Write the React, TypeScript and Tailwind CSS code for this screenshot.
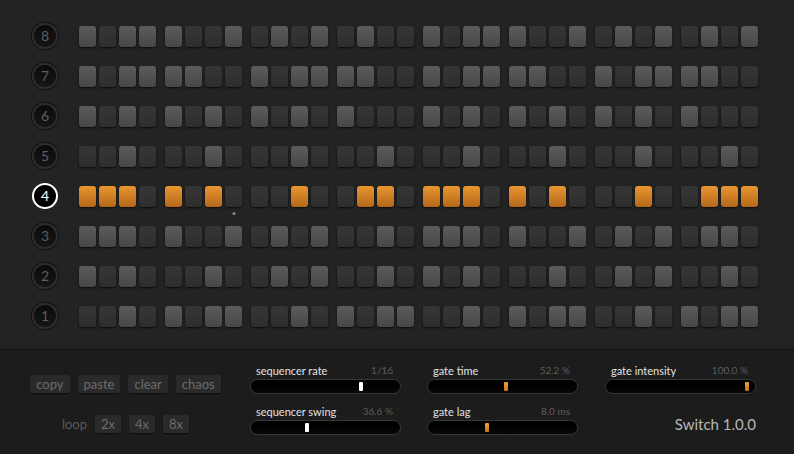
import React from "react";

// L = lit step, D = dark step, O = active (orange) step
const rows: { n: number; steps: string }[] = [
  { n: 8, steps: "LDLL LDDL DLDL DLDD LDLL LDDL DLDL DLDL" },
  { n: 7, steps: "LDLL LLDD LDLL LLDD LDLL LLDD LDLL LLDD" },
  { n: 6, steps: "LDLD LDLD LDLD LDDD LDLD LDLD LDLD LDDD" },
  { n: 5, steps: "DDLD DDLD DDLD DDLD DDLD DDLD DDLD DDLD" },
  { n: 4, steps: "OOOD ODOD DDOD DOOD OOOD ODOD DDOD DOOO" },
  { n: 3, steps: "LLLD LDDL DLDL DDLD LLLD LDDL DLDL DLLD" },
  { n: 2, steps: "LDLD DDLD DLDL DDLD LDLD DDLD DLDL DDLD" },
  { n: 1, steps: "DDLD LDLL DDLD LDLL DDLD LDLL DDLD LDLL" },
];

const activeRow = 4;
const playStep = 7;

function Step({ kind, play }: { kind: string; play: boolean }) {
  const cls =
    kind === "O"
      ? "bg-gradient-to-b from-[#ea962f] to-[#b5681a]"
      : kind === "L"
        ? "bg-gradient-to-b from-[#5c5c5c] to-[#474747]"
        : "bg-gradient-to-b from-[#363636] to-[#2d2d2d]";
  return (
    <div
      className={`relative h-[21px] w-[17px] rounded-[3px] shadow-[0_1px_2px_rgba(0,0,0,0.7)] ${cls}`}
    >
      {play ? (
        <span className="absolute left-1/2 top-[26px] h-[3px] w-[3px] -translate-x-1/2 rounded-full bg-[#8a8a8a]" />
      ) : null}
    </div>
  );
}

function RowBadge({ n, active }: { n: number; active: boolean }) {
  return (
    <div
      className={`flex h-[26px] w-[26px] shrink-0 items-center justify-center rounded-full text-[14px] leading-none ${
        active
          ? "border-2 border-white bg-black text-white"
          : "border-2 border-[#2e2e2e] bg-gradient-to-b from-[#0a0a0a] to-[#161616] text-[#5e5e5e] shadow-[0_0_0_1px_rgba(0,0,0,0.6)]"
      }`}
    >
      {n}
    </div>
  );
}

function Btn({ label }: { label: string }) {
  return (
    <button
      type="button"
      className="flex h-[18px] items-center rounded-[2px] bg-[#2a2a2a] px-[6px] text-[13px] leading-none text-[#6c6c6c] shadow-[0_1px_1px_rgba(0,0,0,0.5)]"
    >
      {label}
    </button>
  );
}

type SliderProps = {
  label: string;
  value: string;
  pos: number;
  orange?: boolean;
};

function Slider({ label, value, pos, orange }: SliderProps) {
  return (
    <div className="flex w-[151px] flex-col">
      <div className="flex h-[14px] items-start justify-between px-[6px]">
        <span className="text-[11px] leading-none text-[#e2e2e2]">{label}</span>
        <span className="pr-[2px] text-[10px] leading-none text-[#5c5c5c]">{value}</span>
      </div>
      <div className="relative h-[15px] rounded-full border border-[#363636] bg-gradient-to-b from-[#000] to-[#0a0a0a] shadow-[inset_0_1px_2px_rgba(0,0,0,0.9)]">
        <span
          className={`absolute top-[2px] h-[9px] w-[4px] rounded-[1px] ${
            orange ? "bg-gradient-to-b from-[#f3a23a] to-[#c8721c]" : "bg-white"
          }`}
          style={{ left: `${pos}px` }}
        />
      </div>
    </div>
  );
}

export default function App() {
  return (
    <div
      className="flex h-[454px] w-[794px] flex-col overflow-hidden bg-[#232323]"
      style={{ fontFamily: "Lato, 'Open Sans', sans-serif" }}
    >
      <div className="flex h-[349px] flex-col pl-8 pt-4">
        {rows.map((row) => {
          const steps = row.steps.replace(/ /g, "").split("");
          const groups = [0, 1, 2, 3, 4, 5, 6, 7].map((g) => steps.slice(g * 4, g * 4 + 4));
          return (
            <div key={row.n} className="flex h-10 items-center">
              <RowBadge n={row.n} active={row.n === activeRow} />
              <div className="ml-[21px] flex gap-[9px]">
                {groups.map((g, gi) => (
                  <div key={gi} className="flex gap-[3px]">
                    {g.map((k, i) => (
                      <Step
                        key={i}
                        kind={k}
                        play={row.n === activeRow && gi * 4 + i === playStep}
                      />
                    ))}
                  </div>
                ))}
              </div>
            </div>
          );
        })}
      </div>

      <div className="flex flex-1 border-t border-[#111] bg-[#1c1c1c]">
        <div className="ml-[31px] mt-[25px] flex w-[189px] flex-col items-center gap-[22px]">
          <div className="flex gap-[8px]">
            <Btn label="copy" />
            <Btn label="paste" />
            <Btn label="clear" />
            <Btn label="chaos" />
          </div>
          <div className="flex items-center gap-[8px]">
            <span className="text-[13px] leading-none text-[#5a5a5a]">loop</span>
            <Btn label="2x" />
            <Btn label="4x" />
            <Btn label="8x" />
          </div>
        </div>

        <div className="ml-[30px] mt-[15px] flex flex-col gap-[12px]">
          <Slider label="sequencer rate" value="1/16" pos={108} />
          <Slider label="sequencer swing" value="36.6 %" pos={54} />
        </div>

        <div className="ml-[26px] mt-[15px] flex flex-col gap-[12px]">
          <Slider label="gate time" value="52.2 %" pos={76} orange />
          <Slider label="gate lag" value="8.0 ms" pos={57} orange />
        </div>

        <div className="ml-[27px] mt-[15px] flex flex-col">
          <Slider label="gate intensity" value="100.0 %" pos={139} orange />
          <div className="mt-[23px] text-right text-[15px] leading-none text-[#b8b8b8]">
            Switch 1.0.0
          </div>
        </div>
      </div>
    </div>
  );
}
